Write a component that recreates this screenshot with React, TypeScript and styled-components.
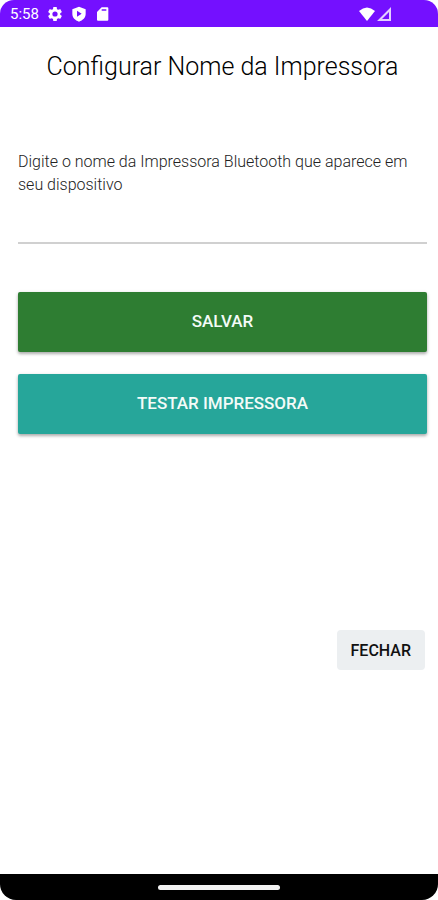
import React from "react";
import styled, { createGlobalStyle } from "styled-components";

const GlobalStyle = createGlobalStyle`
  *, *::before, *::after { box-sizing: border-box; }
  body { margin: 0; background: #fff; font-family: Roboto, "Liberation Sans", sans-serif; }
`;

const Screen = styled.div`
  display: flex;
  flex-direction: column;
  min-height: 100vh;
  background: #fff;
  border-radius: 14px 14px 16px 16px;
  overflow: hidden;
`;

const StatusBar = styled.header`
  display: flex;
  align-items: center;
  justify-content: space-between;
  height: 27px;
  padding: 1px 46px 0 10px;
  background: #7410ff;
  color: #fff;
`;

const StatusGroup = styled.div<{ $gap: number }>`
  display: flex;
  align-items: center;
  gap: ${(p) => p.$gap}px;
`;

const Clock = styled.time`
  font-size: 15px;
  line-height: 18px;
`;

const StatusIcon = styled.svg`
  display: block;
  height: 16px;
  fill: currentColor;
`;

const Content = styled.main`
  flex: 1;
  display: flex;
  flex-direction: column;
  padding: 23px 11px 0 18px;
`;

const Title = styled.h1`
  margin: 0 0 66px;
  font-size: 25px;
  line-height: 34px;
  font-weight: 300;
  text-align: center;
  color: #000;
`;

const Field = styled.div`
  display: flex;
  flex-direction: column;
  margin-bottom: 48px;
`;

const Label = styled.label`
  font-size: 16px;
  line-height: 23px;
  font-weight: 300;
  color: #222;
`;

const NameInput = styled.input`
  width: 100%;
  height: 48px;
  padding: 0;
  border: 0;
  border-bottom: 2px solid #d0d0d0;
  border-radius: 0;
  background: transparent;
  font: inherit;
  font-size: 16px;
  outline: none;
`;

const Actions = styled.div`
  display: flex;
  flex-direction: column;
  gap: 22px;
`;

const ActionButton = styled.button<{ $tone: "save" | "test" }>`
  height: 60px;
  padding: 0 16px 2px;
  border: 0;
  border-radius: 2px;
  background: ${(p) => (p.$tone === "save" ? "#2e7d32" : "#26a69a")};
  box-shadow: 0 2px 3px rgba(0, 0, 0, 0.26), 0 1px 4px rgba(0, 0, 0, 0.12);
  color: #f4fbf8;
  font: inherit;
  font-size: 17px;
  font-weight: 500;
  text-transform: uppercase;
  cursor: pointer;
`;

const Footer = styled.footer`
  display: flex;
  justify-content: flex-end;
  margin-top: 196px;
  padding-right: 2px;
`;

const CloseButton = styled.button`
  height: 40px;
  padding: 0 14px;
  border: 0;
  border-radius: 4px;
  background: #eceff1;
  color: #111;
  font: inherit;
  font-size: 16px;
  font-weight: 500;
  text-transform: uppercase;
  cursor: pointer;
`;

const NavigationBar = styled.div`
  display: flex;
  align-items: center;
  justify-content: center;
  height: 26px;
  background: #000;
`;

const HomeHandle = styled.div`
  width: 28%;
  height: 5px;
  border-radius: 3px;
  background: #f2f2f2;
`;

export default function App() {
  return (
    <>
      <GlobalStyle />
      <Screen>
        <StatusBar>
          <StatusGroup $gap={8}>
            <Clock>5:58</Clock>
            <StatusIcon width="16" viewBox="1 1 22 22" aria-hidden="true">
              <path d="M19.14 12.94c.04-.3.06-.61.06-.94 0-.32-.02-.64-.07-.94l2.03-1.58a.49.49 0 0 0 .12-.61l-1.92-3.32a.49.49 0 0 0-.59-.22l-2.39.96c-.5-.38-1.03-.7-1.62-.94l-.36-2.54a.48.48 0 0 0-.48-.41h-3.84a.47.47 0 0 0-.47.41l-.36 2.54c-.59.24-1.13.57-1.62.94l-2.39-.96a.48.48 0 0 0-.59.22L2.74 8.87a.47.47 0 0 0 .12.61l2.03 1.58c-.05.3-.09.63-.09.94s.02.64.07.94l-2.03 1.58a.49.49 0 0 0-.12.61l1.92 3.32c.12.22.37.29.59.22l2.39-.96c.5.38 1.03.7 1.62.94l.36 2.54c.05.24.24.41.48.41h3.84c.24 0 .44-.17.47-.41l.36-2.54c.59-.24 1.13-.56 1.62-.94l2.39.96c.22.08.47 0 .59-.22l1.92-3.32a.47.47 0 0 0-.12-.61zM12 15.6A3.6 3.6 0 1 1 12 8.4a3.6 3.6 0 0 1 0 7.2z" />
            </StatusIcon>
            <StatusIcon width="16" viewBox="0 0 24 24" aria-hidden="true">
              <path fillRule="evenodd" d="M12 1 2 5v7c0 5.500 4.200 9.500 10 11.500 5.800-2 10-6 10-11.500V5zM9 7v9l7-4.500z" />
            </StatusIcon>
            <StatusIcon width="16" viewBox="0 0 24 24" aria-hidden="true">
              <path fillRule="evenodd" d="M10 2 3 9v11.500Q3 22 4.500 22h14q1.500 0 1.500-1.500v-17Q20 2 18.500 2zM10 5h7v2h-7z" />
            </StatusIcon>
          </StatusGroup>
          <StatusGroup $gap={1}>
            <StatusIcon width="18" viewBox="0 0 18 16" aria-hidden="true">
              <path d="M1 5Q9-2 17 5L9 15z" />
            </StatusIcon>
            <StatusIcon width="15" viewBox="0 0 15 16" aria-hidden="true">
              <path fillRule="evenodd" opacity="0.8" d="M14 1v14H0zM12 6v7H5z" />
            </StatusIcon>
          </StatusGroup>
        </StatusBar>
        <Content>
          <Title>Configurar Nome da Impressora</Title>
          <Field>
            <Label htmlFor="printer-name">
              Digite o nome da Impressora Bluetooth que aparece em seu dispositivo
            </Label>
            <NameInput id="printer-name" type="text" />
          </Field>
          <Actions>
            <ActionButton type="button" $tone="save">Salvar</ActionButton>
            <ActionButton type="button" $tone="test">Testar Impressora</ActionButton>
          </Actions>
          <Footer>
            <CloseButton type="button">Fechar</CloseButton>
          </Footer>
        </Content>
        <NavigationBar>
          <HomeHandle />
        </NavigationBar>
      </Screen>
    </>
  );
}
